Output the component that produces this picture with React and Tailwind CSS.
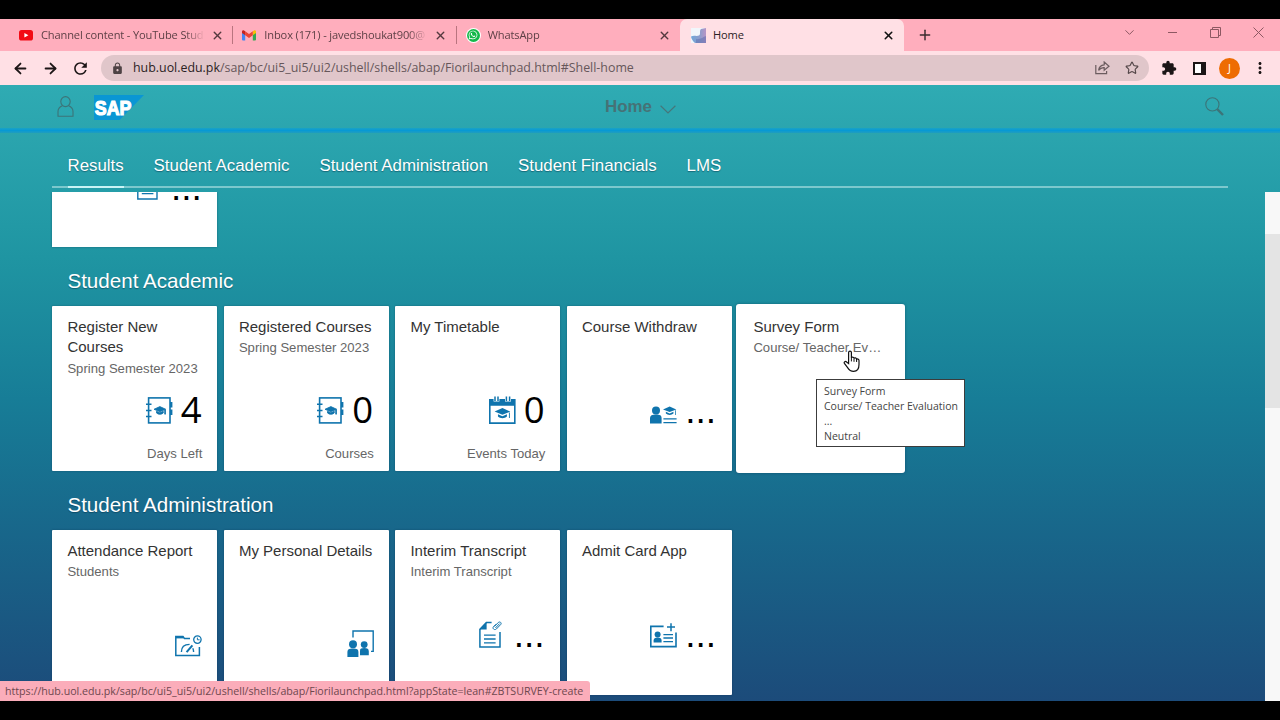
import { X, Plus, ArrowLeft, ArrowRight, Star, ChevronDown } from 'lucide-react';
import { MdExtension, MdLock, MdRefresh, MdMoreVert } from 'react-icons/md';
import { FaWhatsapp } from 'react-icons/fa';

const BLUE = '#0f74ad';

function YoutubeIcon() {
  return (
    <svg width="14" height="11" viewBox="0 0 14 11">
      <rect width="14" height="10.5" rx="2.6" fill="#f20a14" />
      <path d="M5.4 3 L9.4 5.3 L5.4 7.6 Z" fill="#fff" />
    </svg>
  );
}

function GmailIcon() {
  return (
    <svg width="14" height="11" viewBox="0 0 14 11">
      <path d="M0 1.5 L3.2 3.9 V10.5 H1 A1 1 0 0 1 0 9.5 Z" fill="#4285f4" />
      <path d="M14 1.5 L10.8 3.9 V10.5 H13 A1 1 0 0 0 14 9.5 Z" fill="#34a853" />
      <path d="M10.8 1.2 L12 .4 C13 -.2 14 .4 14 1.6 V3 L10.8 5.3 Z" fill="#fbbc04" />
      <path d="M3.2 1.2 L7 4 L10.8 1.2 V5.3 L7 8 L3.2 5.3 Z" fill="#ea4335" />
      <path d="M0 3 V1.6 C0 .4 1 -.2 2 .4 L3.2 1.2 V5.3 Z" fill="#c5221f" />
    </svg>
  );
}

function WhatsappIcon() {
  return (
    <span className="flex h-[15px] w-[15px] items-center justify-center rounded-full bg-white">
      <span className="flex h-[13px] w-[13px] items-center justify-center rounded-full bg-[#14b84a]">
        <FaWhatsapp size={10} color="#fff" />
      </span>
    </span>
  );
}

function HomeIcon() {
  return (
    <svg width="15" height="15" viewBox="0 0 15 15">
      <defs>
        <linearGradient id="fav" x1="0" y1="0" x2="1" y2="0">
          <stop offset="0" stopColor="#6fa6d8" />
          <stop offset=".6" stopColor="#8f9ccb" />
          <stop offset="1" stopColor="#b795c6" />
        </linearGradient>
      </defs>
      <rect width="15" height="15" fill="#f1f6fb" />
      <path d="M0 8.6 C3 7 5 8.6 8 7.6 C10 6.6 8 2.6 10 1 L15 0 V15 H4 C1.6 13 .4 11 0 8.6 Z" fill="url(#fav)" />
      <path d="M5 11 C9 12 12 9 15 8 V15 H5 Z" fill="#5f6fae" opacity=".55" />
    </svg>
  );
}

function Cap({ x, y, s = 1 }) {
  return (
    <g transform={`translate(${x} ${y}) scale(${s})`} fill={BLUE}>
      <path d="M0 3.2 L7 0 L14 3.2 L7 6 Z" />
      <path d="M3 5.6 L7 7.4 L11 5.6 V7.6 C9 9.6 5 9.6 3 7.6 Z" />
      <path d="M12.8 4 H13.6 V9 H12.8 Z" />
    </g>
  );
}

function CourseBook() {
  return (
    <svg width="27" height="27" viewBox="0 0 27 27" fill="none" stroke={BLUE}>
      <rect x="2.6" y=".9" width="21.4" height="25" strokeWidth="1.6" />
      <path d="M0 7.2 H5.5 M0 13.4 H5.5 M0 19.6 H5.5" strokeWidth="1.5" />
      <path d="M25.2 5 V10.6 M25.2 12.4 V18" strokeWidth="2.4" />
      <Cap x={8} y={9.6} s={0.84} />
    </svg>
  );
}

function CourseCalendar() {
  return (
    <svg width="27" height="28" viewBox="0 0 27 28">
      <path d="M0 3 H26.6 V28 H0 Z M1.6 9.8 V26.2 H25 V9.8 Z" fill={BLUE} fillRule="evenodd" />
      <path d="M4.6 3 H10.4 V5.6 H4.6 Z M16 3 H22 V5.6 H16 Z" fill="#fff" />
      <path d="M6 .4 V5 M9 .4 V5 M17.4 .4 V5 M20.6 .4 V5" stroke={BLUE} strokeWidth="1.5" />
      <Cap x={5.6} y={12} s={1.12} />
    </svg>
  );
}

function StudyLeave() {
  return (
    <svg width="27" height="18" viewBox="0 0 27 18">
      <circle cx="6" cy="4.5" r="4" fill={BLUE} />
      <path d="M0 17.4 V12 C0 9.4 2 8.4 6 8.4 C10 8.4 11.6 9.4 11.6 12 V17.4 Z" fill={BLUE} />
      <path d="M13.4 12.8 H26.6 M13.4 16.6 H26.6" stroke={BLUE} strokeWidth="1.3" />
      <Cap x={13} y={0.4} s={0.95} />
    </svg>
  );
}

function Performance() {
  return (
    <svg width="27" height="22" viewBox="0 0 27 22" fill="none" stroke={BLUE} className="mb-[1.5px]">
      <path d="M15 3.4 H9.4 L8 1.6 H.8 V20.6 H24.4 V12" strokeWidth="1.5" />
      <path d="M1 2.4 H8.4" strokeWidth="2" />
      <path d="M6.4 17 C6.4 12 9 9.4 14.6 9.4 M18.6 17 C18.6 15.4 18.3 14.2 17.8 13.2" strokeWidth="1.4" />
      <path d="M11.6 17.2 L17.4 10.4" strokeWidth="2" />
      <circle cx="22.4" cy="4.6" r="3.7" strokeWidth="1.3" />
      <path d="M22.4 2.6 V4.8 H24.6" strokeWidth="1" />
    </svg>
  );
}

function PersonalDetails() {
  return (
    <svg width="27" height="28" viewBox="0 0 27 28">
      <path d="M6 7.6 V1 H26.2 V21.4 H24" fill="none" stroke={BLUE} strokeWidth="1.4" />
      <circle cx="6" cy="14.3" r="4" fill={BLUE} />
      <path d="M.4 27 V22.4 C.4 19.6 2 18.6 6 18.6 C10 18.6 11.4 19.6 11.4 22.4 V27 Z" fill={BLUE} />
      <circle cx="17.2" cy="14.6" r="3.4" fill={BLUE} />
      <path d="M13 25.2 V20.4 C13 18.8 14.4 18 17.2 18 C20.4 18 21.8 19 21.8 21.4 V25.2 Z" fill={BLUE} />
    </svg>
  );
}

function Transcript() {
  return (
    <svg width="27" height="27" viewBox="0 0 27 27" fill="none" stroke={BLUE}>
      <path d="M12.6 1.4 H7.4 L.9 8.4 V26 H21 V11" strokeWidth="1.5" />
      <path d="M7.6 1 V8.4 H.6 Z" fill={BLUE} stroke="none" />
      <path d="M5 14.2 H16.6 M5 18 H16.6 M5 21.8 H16.6" strokeWidth="1.3" />
      <path d="M15.2 5.6 L19.4 1.4 C20.8 .2 23 1.8 21.8 3.4 L17.4 8 C15.6 9.6 13 7.6 14.4 5.8 L17 3.2 M16.4 7 L20.6 2.6" strokeWidth="1" />
    </svg>
  );
}

function AdmitCard() {
  return (
    <svg width="27" height="25" viewBox="0 0 27 25">
      <path d="M13.6 3.4 H.8 V23.6 H26 V9.6" fill="none" stroke={BLUE} strokeWidth="1.6" />
      <path d="M17 4 H25 M21 .2 V8.2" stroke={BLUE} strokeWidth="1.5" />
      <circle cx="7.6" cy="11.4" r="3" fill={BLUE} />
      <path d="M3.6 19.4 V17.4 C3.6 15.4 5 14.4 7.6 14.4 C10.4 14.4 11.6 15.4 11.6 17.4 V19.4 Z" fill={BLUE} />
      <path d="M13.4 11.6 H23 M13.4 15 H23 M13.4 18.6 H23" stroke={BLUE} strokeWidth="1.3" />
    </svg>
  );
}

const browserTabs = [
  { title: 'Channel content - YouTube Stud', icon: <YoutubeIcon /> },
  { title: 'Inbox (171) - javedshoukat900@', icon: <GmailIcon /> },
  { title: 'WhatsApp', icon: <WhatsappIcon /> },
];

const groups = [
  {
    name: 'Student Academic',
    tiles: [
      { title: 'Register New Courses', subtitle: 'Spring Semester 2023', icon: <CourseBook />, value: '4', unit: 'Days Left' },
      { title: 'Registered Courses', subtitle: 'Spring Semester 2023', icon: <CourseBook />, value: '0', unit: 'Courses' },
      { title: 'My Timetable', icon: <CourseCalendar />, value: '0', unit: 'Events Today' },
      { title: 'Course Withdraw', icon: <StudyLeave />, value: '...' },
      { title: 'Survey Form', subtitle: 'Course/ Teacher Ev…', hovered: true },
    ],
  },
  {
    name: 'Student Administration',
    tiles: [
      { title: 'Attendance Report', subtitle: 'Students', icon: <Performance /> },
      { title: 'My Personal Details', icon: <PersonalDetails /> },
      { title: 'Interim Transcript', subtitle: 'Interim Transcript', icon: <Transcript />, value: '...' },
      { title: 'Admit Card App', icon: <AdmitCard />, value: '...' },
    ],
  },
];

function TabStrip() {
  return (
    <div className="flex h-8 bg-[#ffaebd] text-[11.1px] tracking-[-0.14px] text-[#5e4046]">
      <div className="flex w-[680px] pl-[10px]">
        {browserTabs.map((tab, i) => (
          <div key={tab.title} className="flex w-[224px] items-center pl-[9px]">
            <span className="flex w-[22px] shrink-0">{tab.icon}</span>
            <span className="w-[164px] overflow-hidden whitespace-nowrap mask-r-from-88%">
              {tab.title}
            </span>
            <X size={13} strokeWidth={2.6} color="#54383e" className="ml-[6px] shrink-0" />
            {i < 2 && <span className="ml-auto h-[18px] w-px bg-[#b9747f]" />}
          </div>
        ))}
      </div>
      <div className="flex w-[224px] items-center rounded-t-[7px] bg-[#ffe0e5] pl-[11px] text-[#2b2224]">
        <HomeIcon />
        <span className="ml-[7px]">Home</span>
        <X size={13} strokeWidth={2.8} color="#111" className="mr-[9px] ml-auto" />
      </div>
      <Plus size={16} strokeWidth={2.2} color="#3a2c2f" className="mt-2 ml-[13px]" />
      <div className="mt-[5px] mr-[16px] ml-auto flex h-4 items-center text-[#8d5862]">
        <ChevronDown size={15} strokeWidth={1.6} />
        <span className="ml-[31px] h-px w-[9px] bg-current" />
        <svg width="11" height="11" viewBox="0 0 11 11" className="ml-[33px]" fill="none" stroke="currentColor">
          <path d="M.5 2.5 H8.5 V10.5 H.5 Z M2.5 2.5 V.5 H10.5 V8.5 H8.5" />
        </svg>
        <svg width="11" height="11" viewBox="0 0 11 11" className="ml-[32px]" fill="none" stroke="currentColor">
          <path d="M.5 .5 L10.5 10.5 M10.5 .5 L.5 10.5" />
        </svg>
      </div>
    </div>
  );
}

function Toolbar() {
  return (
    <div className="flex h-[34px] items-center bg-[#ffe0e5] pl-3">
      <ArrowLeft size={17} strokeWidth={2.5} color="#1c1516" />
      <ArrowRight size={17} strokeWidth={2.5} color="#1c1516" className="ml-[13px]" />
      <MdRefresh size={19} color="#1c1516" className="ml-[12px]" />
      <div className="ml-[11px] flex h-[26px] w-[1048px] items-center rounded-full bg-[#e0c6ca] pr-[10px] pl-[10px]">
        <MdLock size={13} color="#4d4244" />
        <span className="ml-[9px] text-[12.4px] whitespace-nowrap text-[#66575a]">
          <span className="text-[#2a2223]">hub.uol.edu.pk</span>
          /sap/bc/ui5_ui5/ui2/ushell/shells/abap/Fiorilaunchpad.html#Shell-home
        </span>
        <svg width="15" height="14" viewBox="0 0 15 14" className="ml-auto" fill="none" stroke="#6b5c5f" strokeWidth="1.2">
          <path d="M.8 4 V12.6 H11.6 V10" />
          <path d="M3.6 9.4 C4 6 6 4 9.2 3.8 V1 L14 5.2 L9.2 9.2 V6.6 C7 6.4 5 7.4 3.6 9.4 Z" />
        </svg>
        <Star size={14} strokeWidth={2} color="#55484a" className="ml-[15px]" />
      </div>
      <MdExtension size={16} color="#1c1516" className="ml-[12px]" />
      <span className="ml-[16px] h-[13px] w-[13px] border-2 border-r-[5px] border-[#1c1516] bg-white" />
      <span className="ml-[13px] flex h-[21px] w-[21px] items-center justify-center rounded-full bg-[#ee6c02] text-[11px] text-white">
        J
      </span>
      <MdMoreVert size={18} color="#1c1516" className="ml-[11px]" />
    </div>
  );
}

function ShellHeader() {
  return (
    <div className="relative flex h-[43px] shrink-0 items-center pl-[57px]">
      <svg width="17" height="21" viewBox="0 0 17 21" fill="none" stroke="#3c7478" strokeWidth="1.1">
        <ellipse cx="8.5" cy="5.6" rx="4.7" ry="5" />
        <path d="M5.4 9.8 C2.4 11 1 12.8 1 15.6 V20.2 H16 V15.6 C16 12.8 14.6 11 11.6 9.8" />
      </svg>
      <svg width="51" height="25" viewBox="0 0 51 25" className="mt-[2px] ml-5">
        <path d="M0 0 H50 L25.5 25 H0 Z" fill="#0a96d4" />
        <text
          x="0.8"
          y="19.8"
          textLength="36.5"
          lengthAdjust="spacingAndGlyphs"
          fill="#fff"
          stroke="#fff"
          strokeWidth="1.2"
          className="font-['Liberation_Sans'] text-[20.5px] font-bold"
        >
          SAP
        </text>
      </svg>
      <div className="absolute inset-x-0 top-[1px] flex h-[42px] items-center pl-[605px] font-['Liberation_Sans',sans-serif] text-[16.9px] font-bold text-[#467276]">
        Home
        <svg width="16" height="9" viewBox="0 0 16 9" className="mt-1 ml-2" fill="none" stroke="#46767a" strokeWidth="1.2">
          <path d="M.6 .8 L8 8 L15.4 .8" />
        </svg>
      </div>
      <svg width="19" height="19" viewBox="0 0 19 19" className="mr-[56px] ml-auto" fill="none" stroke="#3c7478">
        <circle cx="7.4" cy="7.4" r="6.6" strokeWidth="1.1" />
        <path d="M12.2 12.2 L18 18" strokeWidth="2.4" />
      </svg>
    </div>
  );
}

function AnchorBar() {
  return (
    <div className="flex h-[59px] shrink-0 pl-[52px] font-['Liberation_Sans',sans-serif] text-[16.87px] text-white text-shadow-[0_1px_1px_rgba(0,40,60,0.45)]">
      <div className="flex h-[55px] w-[1176px] items-stretch gap-[29.9px] border-b-2 border-[#7cc8cd] pl-[15.5px]">
        <span className="-mb-0.5 border-b-2 border-[#c9f3f5] pt-[20.4px]">Results</span>
        <span className="pt-[20.4px]">Student Academic</span>
        <span className="pt-[20.4px]">Student Administration</span>
        <span className="pt-[20.4px]">Student Financials</span>
        <span className="pt-[20.4px]">LMS</span>
      </div>
    </div>
  );
}

function Value({ children }) {
  if (children === '...') {
    return (
      <span className="ml-2 h-[27px] font-['Liberation_Sans',sans-serif] text-[37px] leading-[28px] text-black">
        ...
      </span>
    );
  }
  return (
    <span className="ml-2 h-[27px] font-['Open_Sans',sans-serif] text-[36.5px] leading-[25px] text-black">
      {children}
    </span>
  );
}

function Tile({ tile }) {
  return (
    <div
      className={
        tile.hovered
          ? '-mt-[2px] -ml-[2px] h-[169px] w-[169px] rounded-[3px] bg-white pt-[2px] pl-[2px] shadow-[0_0_3px_rgba(0,30,60,0.4)]'
          : 'h-[165px] w-[165px] rounded-[1px] bg-white shadow-[0_0_2px_rgba(0,30,60,0.4)]'
      }
    >
      <div className="flex h-[165px] w-[165px] flex-col px-[15px] pt-[10.4px] font-['Liberation_Sans',sans-serif]">
        <div className="flex h-[77px] flex-col">
          <h3 className="w-[138px] text-[15px] leading-[20.6px] text-[#333]">{tile.title}</h3>
          {tile.subtitle && (
            <p className="mt-px text-[13.1px] leading-[20px] whitespace-nowrap text-[#666]">{tile.subtitle}</p>
          )}
        </div>
        {tile.value && (
          <div className="mr-[0.8px] flex h-[30px] items-end justify-end">
            {tile.icon}
            <Value>{tile.value}</Value>
          </div>
        )}
        {!tile.value && tile.icon && (
          <div className="flex h-[40.4px] items-end justify-end">{tile.icon}</div>
        )}
        {tile.unit && (
          <p className="mt-[20px] text-right text-[13.1px] leading-[20px] text-[#666]">{tile.unit}</p>
        )}
      </div>
    </div>
  );
}

function Tooltip() {
  return (
    <div className="absolute top-[379px] left-[816px] h-[68px] w-[149px] border border-[#3c3c3c] bg-white pt-[4px] pl-[7px] text-[10.5px] leading-[15px] whitespace-nowrap text-[#444]">
      <p>Survey Form</p>
      <p>Course/ Teacher Evaluation</p>
      <p>...</p>
      <p>Neutral</p>
    </div>
  );
}

function HandCursor() {
  return (
    <svg width="18" height="23" viewBox="0 0 18 23" className="absolute top-[350px] left-[843px]">
      <path
        d="M5.6 13.6 V2.6 C5.6 .6 8.4 .6 8.4 2.6 V8 C8.6 6.6 11 6.8 11 8.6 C11.4 7.4 13.6 7.6 13.6 9.4 C14.2 8.6 16 9 16 10.6 V14.6 C16 18.6 14 21.4 10.6 21.4 C7.4 21.4 6 20 4.6 17.6 L1.4 13.4 C.6 12 2.4 10.8 3.6 12 Z"
        fill="#fff"
        stroke="#111"
        strokeWidth="1.2"
      />
      <path d="M8.4 8 V11.4 M11 8.6 V11.8 M13.6 9.4 V12" stroke="#111" strokeWidth="1" />
    </svg>
  );
}

export default function App() {
  return (
    <div className="relative flex h-[720px] w-[1280px] flex-col overflow-hidden bg-black pt-[19px] pb-[19px] font-['Open_Sans',sans-serif]">
      <TabStrip />
      <Toolbar />
      <div className="flex min-h-0 flex-1 flex-col bg-[linear-gradient(to_bottom,#2fabb3_0%,#1f95a2_28%,#177d97_51%,#18668a_73%,#1c4b7a_100%)]">
        <ShellHeader />
        <div className="h-[5px] shrink-0 bg-linear-to-b from-[#1aa2c4] via-[#0799d4] to-[#1f9dbd]" />
        <AnchorBar />
        <div className="flex min-h-0 flex-1">
          <div className="min-w-0 flex-1 overflow-hidden pl-[52.4px]">
            {/* bottom of the Results group, scrolled under the anchor bar */}
            <div className="flex h-[55px] w-[165px] items-start bg-white pl-[85px] shadow-[0_0_2px_rgba(0,30,60,0.4)]">
              <svg width="21" height="8" viewBox="0 0 21 8" fill="none" stroke={BLUE} strokeWidth="1.4">
                <path d="M.8 0 V7 H20 V0 M4.8 1.6 H16.4" />
              </svg>
              <span className="-mt-[18px] ml-[12.5px] font-['Liberation_Sans',sans-serif] text-[37px] leading-[28px] text-black">
                ...
              </span>
            </div>
            {groups.map((group) => (
              <section key={group.name} className="h-[224px]">
                <h2 className="h-[59.4px] pt-[18px] pl-[15px] font-['Liberation_Sans',sans-serif] text-[20.6px] leading-[31px] text-white text-shadow-[0_1px_1px_rgba(0,40,60,0.45)]">
                  {group.name}
                </h2>
                <div className="flex gap-[6.5px]">
                  {group.tiles.map((tile) => (
                    <Tile key={tile.title} tile={tile} />
                  ))}
                </div>
              </section>
            ))}
          </div>
          <div className="w-[15px] bg-[#f8f8f8] pt-[42px]">
            <div className="h-[174px] bg-[#e4e4e4]" />
          </div>
        </div>
      </div>
      <Tooltip />
      <HandCursor />
      <div className="absolute top-[681px] left-0 h-5 w-[590px] rounded-tr-[3px] bg-[#fbadba] pl-[5px] text-[10.65px] leading-5 whitespace-nowrap text-[#6e474e]">
        https://hub.uol.edu.pk/sap/bc/ui5_ui5/ui2/ushell/shells/abap/Fiorilaunchpad.html?appState=lean#ZBTSURVEY-create
      </div>
    </div>
  );
}
